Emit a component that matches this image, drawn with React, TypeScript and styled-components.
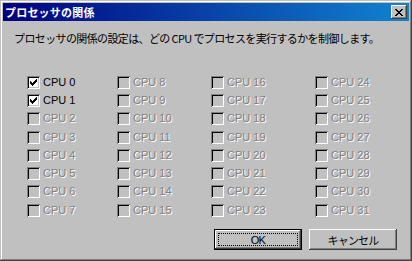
import styled, { createGlobalStyle } from "styled-components";

const GlobalStyle = createGlobalStyle`
  html, body {
    margin: 0;
    padding: 0;
    background: #c0c0c0;
  }
`;

const face = "#c0c0c0";

const Window = styled.div`
  box-sizing: border-box;
  width: 412px;
  height: 261px;
  padding: 3px;
  background: ${face};
  display: flex;
  flex-direction: column;
  box-shadow: inset -1px -1px #404040, inset 1px 1px ${face},
    inset -2px -2px #808080, inset 2px 2px #ffffff;
  font-family: "Liberation Sans", "Noto Sans CJK JP", sans-serif;
`;

const TitleBar = styled.div`
  height: 18px;
  display: flex;
  align-items: center;
  justify-content: space-between;
  padding: 0 2px 0 2px;
  background: linear-gradient(to right, #000080, #1084d0);
`;

const Title = styled.span`
  color: #ffffff;
  font-family: "Noto Sans CJK JP", sans-serif;
  font-weight: bold;
  font-size: 11px;
  line-height: 13px;
  letter-spacing: 0.2px;
`;

const CloseButton = styled.div`
  width: 16px;
  height: 14px;
  background: ${face};
  display: flex;
  align-items: center;
  justify-content: center;
  box-sizing: border-box;
  box-shadow: inset -1px -1px #404040, inset 1px 1px #ffffff,
    inset -2px -2px #808080, inset 2px 2px ${face};
`;

const Body = styled.div`
  flex: 1;
  display: flex;
  flex-direction: column;
  padding: 11px 12px 0 11px;
`;

const Description = styled.div`
  font-family: "Noto Sans CJK JP", sans-serif;
  font-size: 11px;
  line-height: 13px;
  letter-spacing: -0.62px;
  color: #000000;
`;

const Grid = styled.div`
  margin-top: 28px;
  padding-left: 13px;
  display: grid;
  grid-template-columns: 90px 94px 104px auto;
  grid-auto-flow: column;
  grid-template-rows: repeat(8, 18.3px);
`;

const Item = styled.div`
  display: flex;
  align-items: center;
  gap: 3px;
`;

const Box = styled.div<{ $enabled: boolean }>`
  box-sizing: border-box;
  width: 13px;
  height: 13px;
  background: ${(p) => (p.$enabled ? "#ffffff" : face)};
  box-shadow: inset 1px 1px #808080, inset -1px -1px #ffffff,
    inset 2px 2px #000000, inset -2px -2px ${face};
  display: flex;
  align-items: center;
  justify-content: center;
`;

const Label = styled.span<{ $enabled: boolean }>`
  font-size: 11px;
  line-height: 13px;
  color: ${(p) => (p.$enabled ? "#000000" : "#808080")};
  text-shadow: ${(p) => (p.$enabled ? "none" : "1px 1px 0 #ffffff")};
`;

const Buttons = styled.div`
  margin-top: auto;
  margin-bottom: 8px;
  display: flex;
  justify-content: flex-end;
  gap: 7px;
`;

const Button = styled.div<{ $default?: boolean }>`
  box-sizing: border-box;
  width: 88px;
  height: 21px;
  background: ${face};
  display: flex;
  align-items: center;
  justify-content: center;
  font-family: "Liberation Sans", "Noto Sans CJK JP", sans-serif;
  font-size: 11px;
  letter-spacing: -0.8px;
  color: #000000;
  box-shadow: ${(p) =>
    p.$default
      ? `inset -1px -1px #000000, inset 1px 1px #000000, inset -2px -2px #404040, inset 2px 2px #ffffff, inset -3px -3px #808080`
      : `inset -1px -1px #404040, inset 1px 1px #ffffff, inset -2px -2px #808080`};
  position: relative;
`;

const Focus = styled.div`
  position: absolute;
  inset: 4px;
  border: 1px dotted #000000;
`;

const CheckMark = () => (
  <svg width="7" height="7" viewBox="0 0 7 7" shapeRendering="crispEdges">
    <path
      d="M6 0h1v1h-1zM5 1h2v1h-2zM0 2h1v1h-1zM4 2h3v1h-3zM0 3h2v1h-2zM3 3h3v1h-3zM0 4h5v1h-5zM1 5h3v1h-3zM2 6h1v1h-1z"
      fill="#000000"
    />
  </svg>
);

const CloseGlyph = () => (
  <svg width="8" height="7" viewBox="0 0 8 7" shapeRendering="crispEdges">
    <path
      d="M0 0h2v1h-2zM6 0h2v1h-2zM1 1h2v1h-2zM5 1h2v1h-2zM2 2h4v1h-4zM3 3h2v1h-2zM2 4h4v1h-4zM1 5h2v1h-2zM5 5h2v1h-2zM0 6h2v1h-2zM6 6h2v1h-2z"
      fill="#000000"
    />
  </svg>
);

const cpus = Array.from({ length: 32 }, (_, i) => ({
  id: i,
  enabled: i < 2,
  checked: i < 2,
}));

export default function App() {
  return (
    <>
      <GlobalStyle />
      <Window>
        <TitleBar>
          <Title>プロセッサの関係</Title>
          <CloseButton>
            <CloseGlyph />
          </CloseButton>
        </TitleBar>
        <Body>
          <Description>
            プロセッサの関係の設定は、どの CPU でプロセスを実行するかを制御します。
          </Description>
          <Grid>
            {cpus.map((cpu) => (
              <Item key={cpu.id}>
                <Box $enabled={cpu.enabled}>{cpu.checked && <CheckMark />}</Box>
                <Label $enabled={cpu.enabled}>CPU {cpu.id}</Label>
              </Item>
            ))}
          </Grid>
          <Buttons>
            <Button $default>
              <Focus />
              OK
            </Button>
            <Button>キャンセル</Button>
          </Buttons>
        </Body>
      </Window>
    </>
  );
}
